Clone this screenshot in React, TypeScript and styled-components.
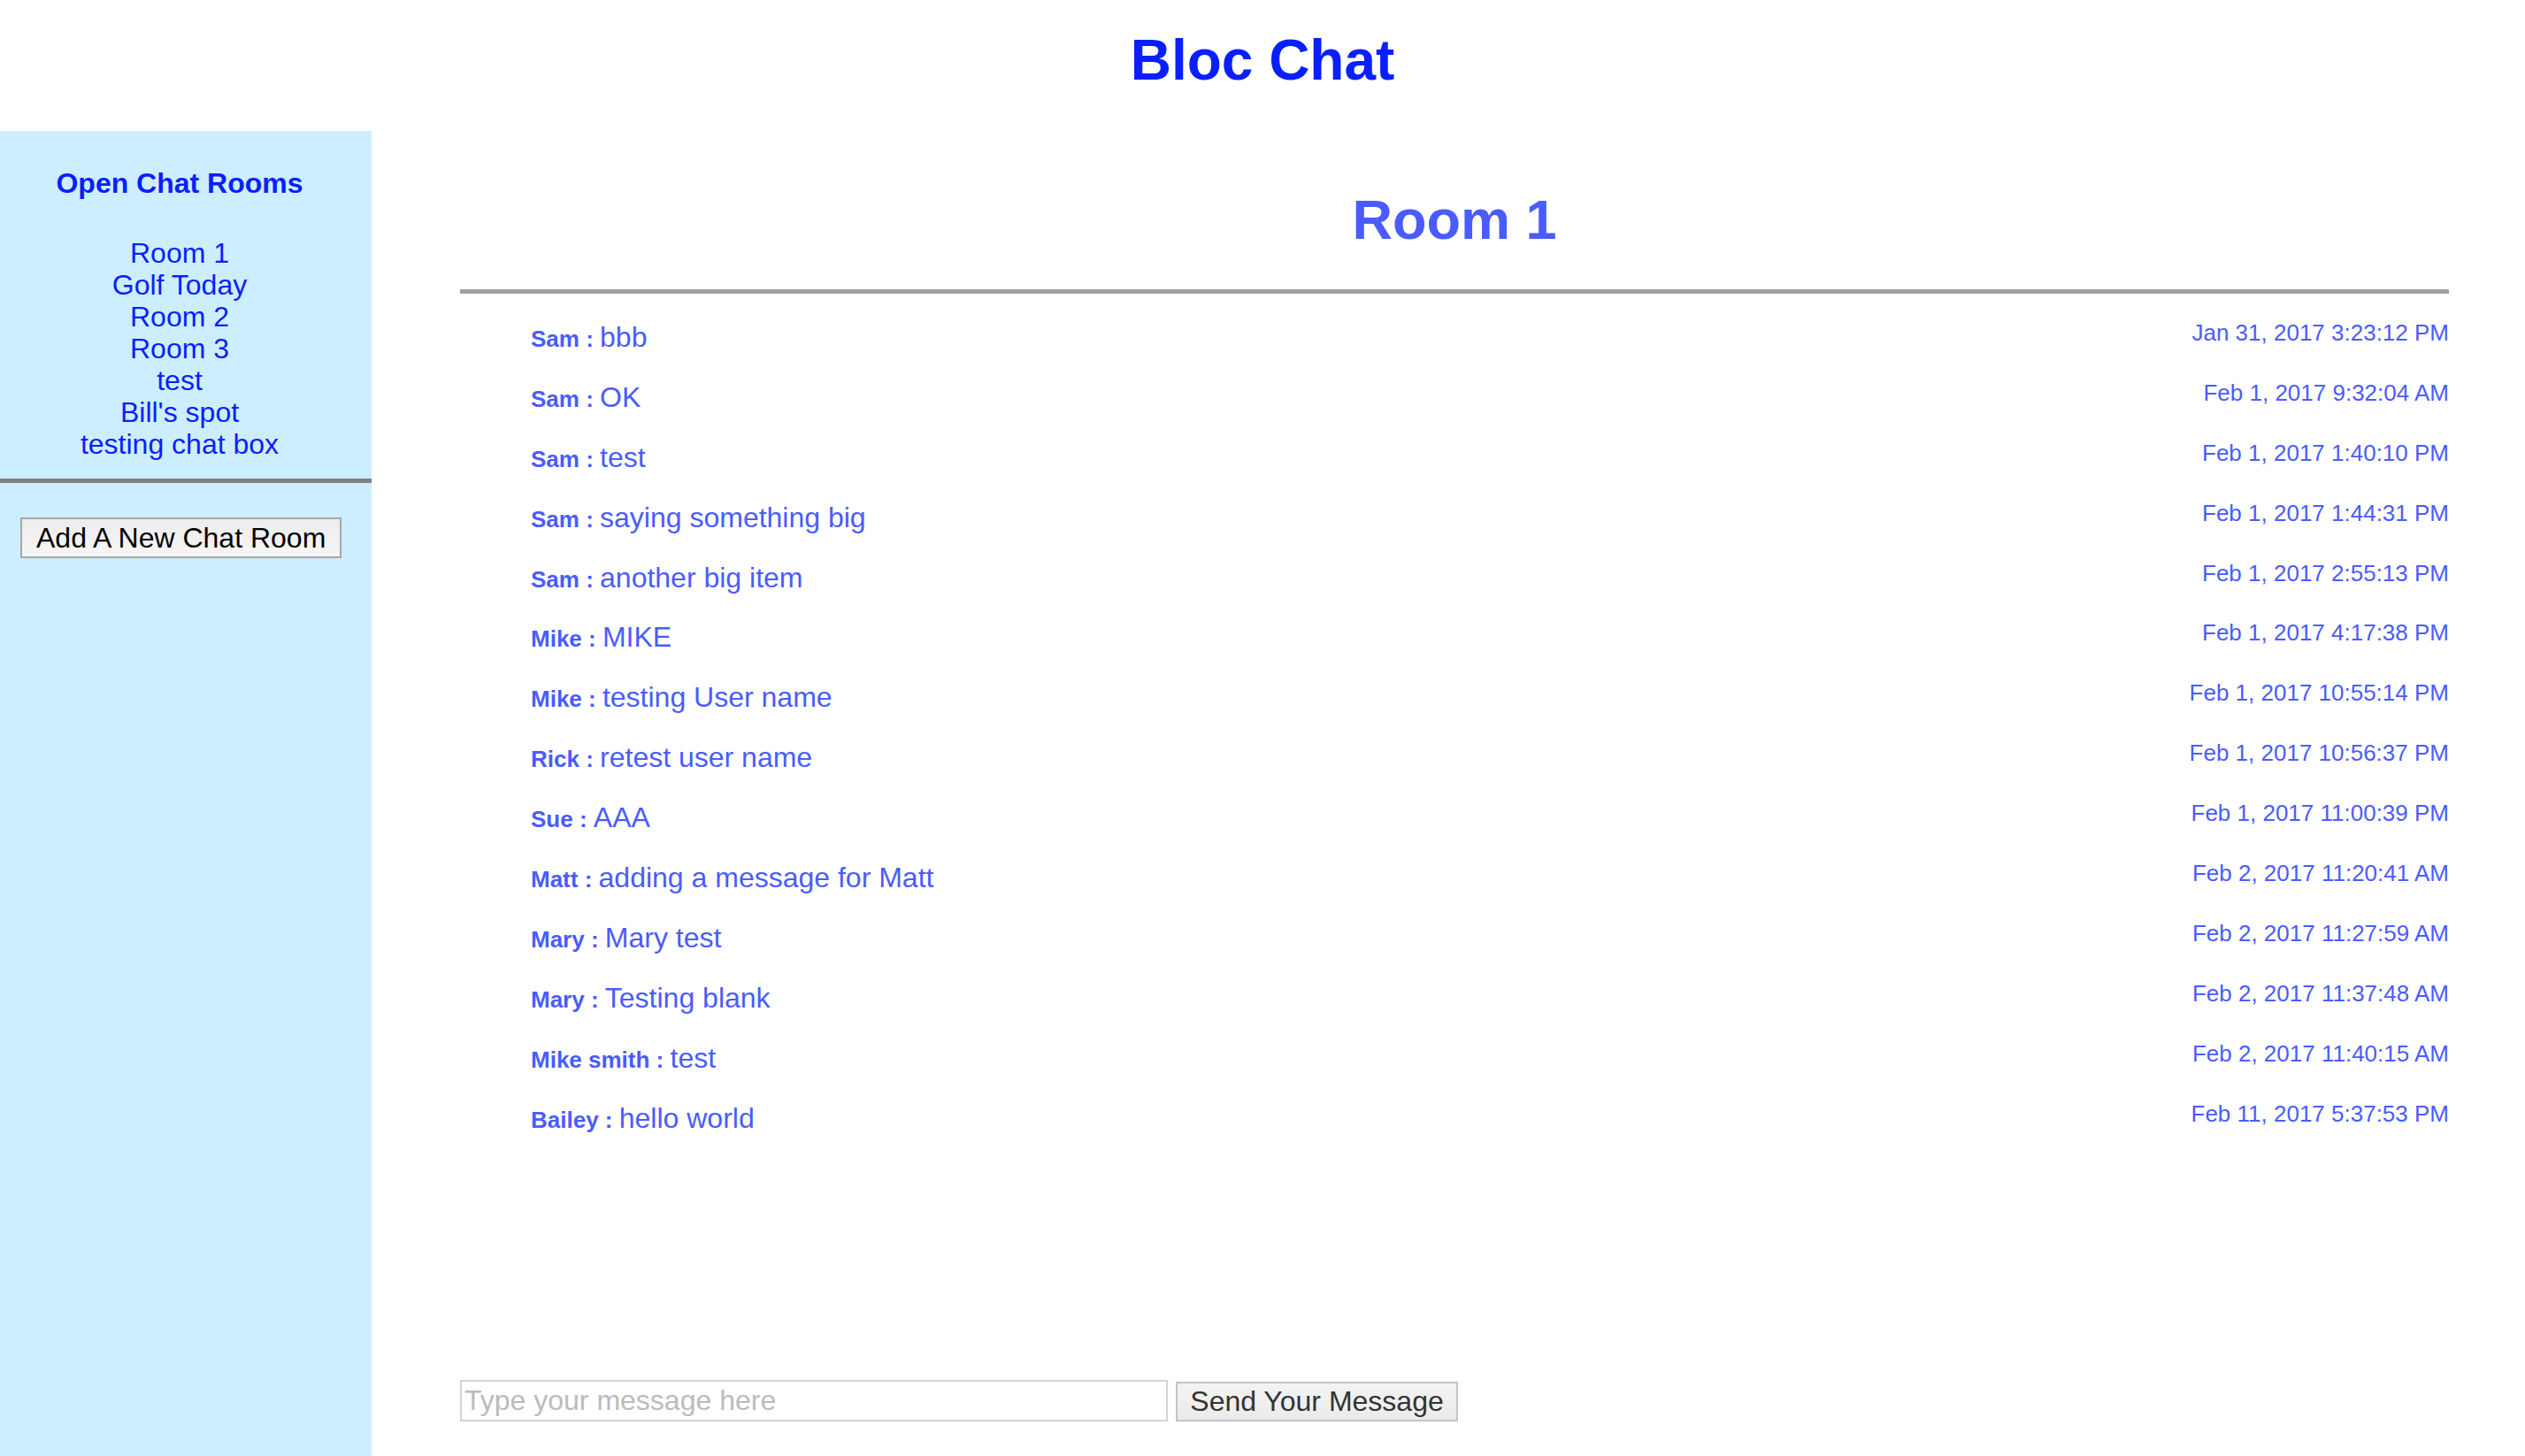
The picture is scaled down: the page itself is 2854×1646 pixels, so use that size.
import styled, { createGlobalStyle } from 'styled-components';

const GlobalStyle = createGlobalStyle`
  html, body {
    margin: 0;
    padding: 0;
    background: #ffffff;
    font-family: "Liberation Sans", Arial, Helvetica, sans-serif;
    overflow: hidden;
  }
  * {
    box-sizing: border-box;
  }
`;

const rooms = ['Room 1', 'Golf Today', 'Room 2', 'Room 3', 'test', "Bill's spot", 'testing chat box'];

const messages = [
  { user: 'Sam', text: 'bbb', time: 'Jan 31, 2017 3:23:12 PM' },
  { user: 'Sam', text: 'OK', time: 'Feb 1, 2017 9:32:04 AM' },
  { user: 'Sam', text: 'test', time: 'Feb 1, 2017 1:40:10 PM' },
  { user: 'Sam', text: 'saying something big', time: 'Feb 1, 2017 1:44:31 PM' },
  { user: 'Sam', text: 'another big item', time: 'Feb 1, 2017 2:55:13 PM' },
  { user: 'Mike', text: 'MIKE', time: 'Feb 1, 2017 4:17:38 PM' },
  { user: 'Mike', text: 'testing User name', time: 'Feb 1, 2017 10:55:14 PM' },
  { user: 'Rick', text: 'retest user name', time: 'Feb 1, 2017 10:56:37 PM' },
  { user: 'Sue', text: 'AAA', time: 'Feb 1, 2017 11:00:39 PM' },
  { user: 'Matt', text: 'adding a message for Matt', time: 'Feb 2, 2017 11:20:41 AM' },
  { user: 'Mary', text: 'Mary test', time: 'Feb 2, 2017 11:27:59 AM' },
  { user: 'Mary', text: 'Testing blank', time: 'Feb 2, 2017 11:37:48 AM' },
  { user: 'Mike smith', text: 'test', time: 'Feb 2, 2017 11:40:15 AM' },
  { user: 'Bailey', text: 'hello world', time: 'Feb 11, 2017 5:37:53 PM' },
];

function App() {
  return (
    <>
      <GlobalStyle />
      <Header>
        <SiteTitle>Bloc Chat</SiteTitle>
      </Header>
      <Layout>
        <Sidebar>
          <SidebarTitle>Open Chat Rooms</SidebarTitle>
          <RoomList>
            {rooms.map((room) => (
              <RoomItem key={room}>{room}</RoomItem>
            ))}
          </RoomList>
          <SidebarDivider />
          <AddRoomButton>Add A New Chat Room</AddRoomButton>
        </Sidebar>
        <Main>
          <RoomTitle>Room 1</RoomTitle>
          <RoomRule />
          <MessageList>
            {messages.map((m, i) => (
              <MessageRow key={i}>
                <MessageBody>
                  <UserName>{m.user} : </UserName>
                  <MessageText>{m.text}</MessageText>
                </MessageBody>
                <TimeStamp>{m.time}</TimeStamp>
              </MessageRow>
            ))}
          </MessageList>
          <MessageForm onSubmit={(e) => e.preventDefault()}>
            <MessageInput placeholder="Type your message here" />
            <SendButton type="submit">Send Your Message</SendButton>
          </MessageForm>
        </Main>
      </Layout>
    </>
  );
}

export default App;

const Header = styled.header`
  height: 148px;
  padding-top: 31px;
  text-align: center;
`;

const SiteTitle = styled.h1`
  margin: 0;
  font-size: 64px;
  line-height: 74px;
  font-weight: 700;
  color: #0a1fff;
`;

const Layout = styled.div`
  display: flex;
  height: 1498px;
`;

const Sidebar = styled.aside`
  flex: 0 0 420px;
  background-color: #cdeeff;
  padding-top: 41px;
  display: flex;
  flex-direction: column;
  align-items: stretch;
`;

const SidebarTitle = styled.h3`
  margin: 0 0 43px;
  padding-right: 14px;
  font-size: 32px;
  line-height: 36px;
  font-weight: 700;
  text-align: center;
  color: #0a1fff;
`;

const RoomList = styled.ul`
  list-style: none;
  margin: 0;
  padding: 0 14px 0 0;
  text-align: center;
`;

const RoomItem = styled.li`
  font-size: 32px;
  line-height: 36px;
  color: #0a1fff;
  cursor: pointer;
`;

const SidebarDivider = styled.div`
  height: 5px;
  margin-top: 21px;
  background-color: #808080;
`;

const AddRoomButton = styled.button`
  align-self: flex-start;
  margin: 39px 0 0 23px;
  height: 46px;
  padding: 0 16px;
  font-family: inherit;
  font-size: 32px;
  color: #000000;
  border: 2px solid #a9a9a9;
  border-radius: 0;
  background: linear-gradient(#ececec, #f6f6f6);
  cursor: pointer;
`;

const Main = styled.main`
  flex: 1;
  display: flex;
  flex-direction: column;
  padding: 63px 86px 39px 100px;
`;

const RoomTitle = styled.h1`
  margin: 0;
  font-size: 63px;
  line-height: 74px;
  font-weight: 700;
  text-align: center;
  color: #4a5cff;
`;

const RoomRule = styled.div`
  height: 5px;
  margin-top: 42px;
  background-color: #a0a0a0;
`;

const MessageList = styled.ul`
  list-style: none;
  margin: 31px 0 0;
  padding: 0;
  flex: 1;
`;

const MessageRow = styled.li`
  height: 67.9px;
  display: flex;
  justify-content: space-between;
  align-items: flex-start;
  padding-left: 80px;
  color: #4a5cff;
`;

const MessageBody = styled.div`
  line-height: 36px;
`;

const UserName = styled.span`
  font-size: 26px;
  font-weight: 700;
  white-space: pre;
`;

const MessageText = styled.span`
  font-size: 32px;
`;

const TimeStamp = styled.span`
  font-size: 26px;
  line-height: 30px;
  margin-top: -2px;
`;

const MessageForm = styled.form`
  display: flex;
  align-items: flex-end;
  gap: 9px;
  margin: 0;
`;

const MessageInput = styled.input`
  width: 800px;
  height: 47px;
  padding: 0 3px;
  font-family: inherit;
  font-size: 32px;
  color: #333333;
  border: 2px solid #d4d4d4;
  outline: none;

  &::placeholder {
    color: #bbbbbb;
  }
`;

const SendButton = styled.button`
  width: 319px;
  height: 45px;
  padding: 0;
  font-family: inherit;
  font-size: 32px;
  color: #333333;
  border: 2px solid #c4c4c4;
  border-radius: 0;
  background: linear-gradient(#f3f3f3, #ebebeb);
  cursor: pointer;
`;
